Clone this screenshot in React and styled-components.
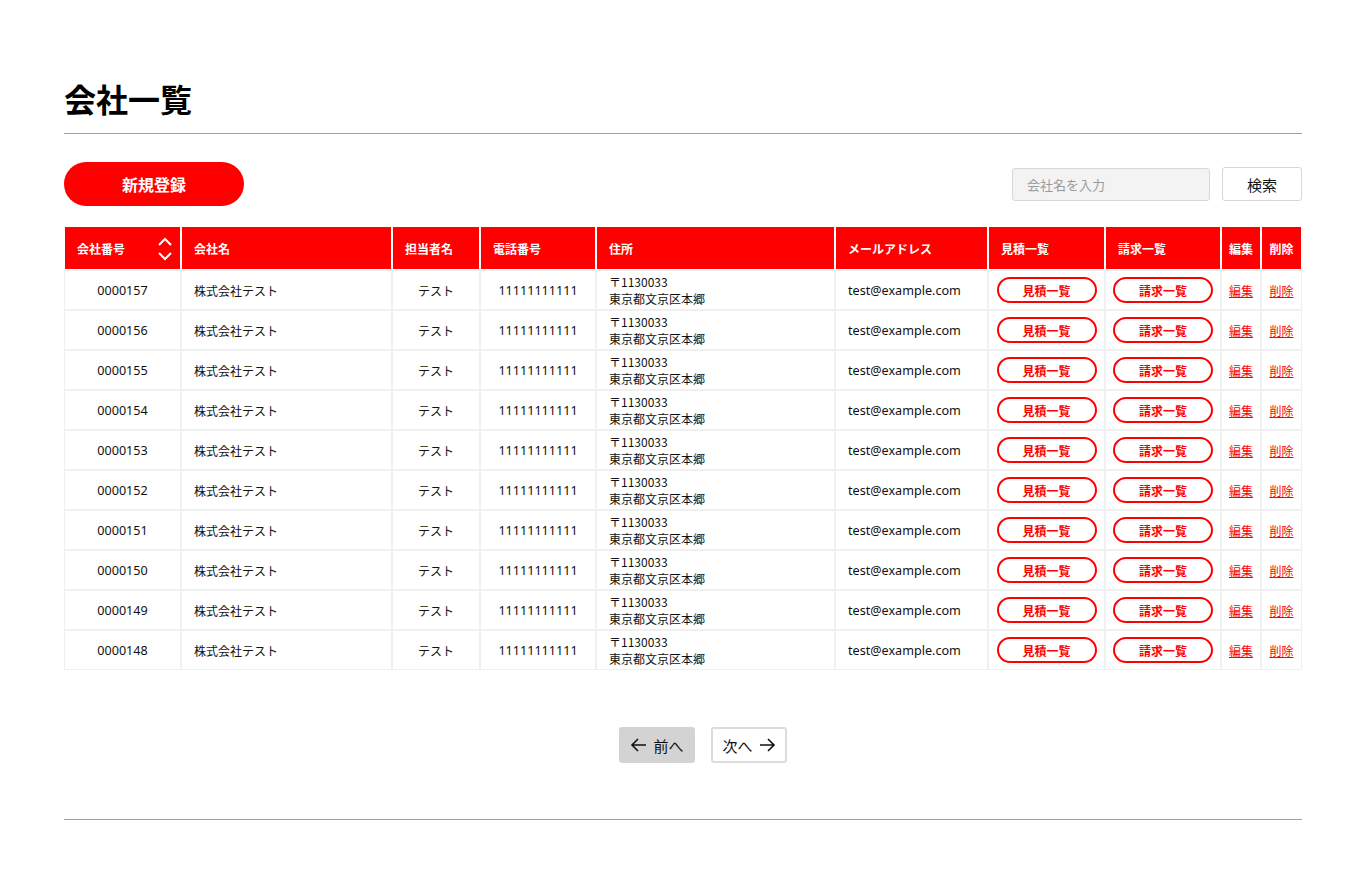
import React from "react";
import styled, { createGlobalStyle } from "styled-components";

const Global = createGlobalStyle`
  html, body { margin: 0; padding: 0; background: #fff; }
  body { font-family: "Noto Sans", "Noto Sans CJK JP", sans-serif; color: #111; }
  * { box-sizing: border-box; }
`;

const Page = styled.div`
  width: 1366px;
  padding: 80px 64px 57px;
`;

const Title = styled.h1`
  margin: 0;
  font-family: "Noto Sans CJK JP", sans-serif;
  font-size: 32px;
  line-height: 36px;
  font-weight: 700;
  color: #000;
`;

const Rule = styled.hr`
  margin: ${(p) => p.$mt || 0}px 0 0;
  border: 0;
  border-top: 1px solid #a0a0a0;
  height: 0;
`;

const Toolbar = styled.div`
  display: flex;
  align-items: center;
  justify-content: space-between;
  margin-top: 28px;
  height: 44px;
`;

const NewButton = styled.button`
  width: 180px;
  height: 44px;
  border: 0;
  border-radius: 22px;
  background: #ff0000;
  color: #fff;
  font-family: "Noto Sans CJK JP", sans-serif;
  font-weight: 700;
  font-size: 16px;
  cursor: pointer;
`;

const SearchBox = styled.div`
  display: flex;
  align-items: center;
  gap: 12px;
`;

const SearchInput = styled.input`
  width: 198px;
  height: 33px;
  border: 1px solid #d8d8d8;
  border-radius: 3px;
  background: #f3f3f3;
  padding: 0 14px;
  font-family: "Noto Sans CJK JP", sans-serif;
  font-size: 13px;
  outline: none;
  &::placeholder { color: #9a9a9a; }
`;

const SearchButton = styled.button`
  width: 80px;
  height: 34px;
  border: 1px solid #d8d8d8;
  border-radius: 3px;
  background: #fff;
  color: #111;
  font-family: "Noto Sans CJK JP", sans-serif;
  font-size: 15px;
`;

const Table = styled.table`
  margin-top: 20px;
  width: 1238px;
  table-layout: fixed;
  border-collapse: separate;
  border-spacing: 0;
`;

const Th = styled.th`
  position: relative;
  height: 44px;
  background: #ff0000;
  border: 1px solid #fff;
  color: #fff;
  font-family: "Noto Sans CJK JP", sans-serif;
  font-size: 12px;
  font-weight: 700;
  text-align: ${(p) => (p.$center ? "center" : "left")};
  padding: ${(p) => (p.$center ? "0" : "0 12px")};
  vertical-align: middle;
`;

const SortIcon = styled.svg`
  position: absolute;
  right: 7px;
  top: 8px;
`;

const Td = styled.td`
  height: 40px;
  border: 1px solid #f0f0f0;
  background: #fff;
  padding: ${(p) => (p.$center ? "0" : "0 12px")};
  text-align: ${(p) => (p.$center ? "center" : "left")};
  vertical-align: middle;
  font-family: ${(p) =>
    p.$latin ? '"Noto Sans", "Noto Sans CJK JP", sans-serif' : '"Noto Sans CJK JP", sans-serif'};
  font-size: ${(p) => (p.$latin ? "12.6px" : "12px")};
  color: #111;
  white-space: nowrap;
`;

const Address = styled.div`
  font-family: "Noto Sans CJK JP", sans-serif;
  font-size: 12px;
  line-height: 17px;
`;

const Pill = styled.button`
  width: 100px;
  height: 26px;
  border: 2px solid #ff0000;
  border-radius: 13px;
  background: #fff;
  color: #ff0000;
  font-family: "Noto Sans CJK JP", sans-serif;
  font-size: 12px;
  font-weight: 700;
  padding: 0;
`;

const TextLink = styled.a`
  color: #ff0000;
  font-family: "Noto Sans CJK JP", sans-serif;
  font-size: 12px;
  text-decoration: underline;
`;

const Pager = styled.div`
  display: flex;
  justify-content: center;
  gap: 16px;
  margin-top: 57px;
  padding-left: 40px;
`;

const PageButton = styled.button`
  display: flex;
  align-items: center;
  justify-content: center;
  gap: 6px;
  width: 76px;
  height: 36px;
  border-radius: 3px;
  border: 2px solid ${(p) => (p.$active ? "#d3d3d3" : "#dcdcdc")};
  background: ${(p) => (p.$active ? "#d3d3d3" : "#fff")};
  color: #111;
  font-family: "Noto Sans CJK JP", sans-serif;
  font-size: 15px;
  padding: 0;
`;

const widths = [117, 211, 88, 116, 239, 153, 117, 116, 40, 41];

const Arrow = ({ dir }) => (
  <svg width="17" height="14" viewBox="0 0 17 14" fill="none" stroke="#111" strokeWidth="1.6">
    {dir === "left" ? (
      <path d="M16 7H2M8 1L2 7l6 6" />
    ) : (
      <path d="M1 7h14M9 1l6 6-6 6" />
    )}
  </svg>
);

const rows = ["0000157", "0000156", "0000155", "0000154", "0000153", "0000152", "0000151", "0000150", "0000149", "0000148"];

export default function App() {
  return (
    <Page>
      <Global />
      <Title>会社一覧</Title>
      <Rule $mt={17} />
      <Toolbar>
        <NewButton>新規登録</NewButton>
        <SearchBox>
          <SearchInput placeholder="会社名を入力" />
          <SearchButton>検索</SearchButton>
        </SearchBox>
      </Toolbar>
      <Table>
        <colgroup>
          {widths.map((w, i) => (
            <col key={i} style={{ width: w }} />
          ))}
        </colgroup>
        <thead>
          <tr>
            <Th>
              会社番号
              <SortIcon width="16" height="28" viewBox="0 0 16 28" fill="none" stroke="#fff" strokeWidth="2">
                <path d="M2 10l6-6 6 6M2 18l6 6 6-6" />
              </SortIcon>
            </Th>
            <Th>会社名</Th>
            <Th>担当者名</Th>
            <Th>電話番号</Th>
            <Th>住所</Th>
            <Th>メールアドレス</Th>
            <Th>見積一覧</Th>
            <Th>請求一覧</Th>
            <Th $center>編集</Th>
            <Th $center>削除</Th>
          </tr>
        </thead>
        <tbody>
          {rows.map((id) => (
            <tr key={id}>
              <Td $center $latin>{id}</Td>
              <Td>株式会社テスト</Td>
              <Td $center>テスト</Td>
              <Td $center $latin>11111111111</Td>
              <Td>
                <Address>
                  〒1130033
                  <br />
                  東京都文京区本郷
                </Address>
              </Td>
              <Td $latin>test@example.com</Td>
              <Td $center>
                <Pill>見積一覧</Pill>
              </Td>
              <Td $center>
                <Pill>請求一覧</Pill>
              </Td>
              <Td $center>
                <TextLink href="#">編集</TextLink>
              </Td>
              <Td $center>
                <TextLink href="#">削除</TextLink>
              </Td>
            </tr>
          ))}
        </tbody>
      </Table>
      <Pager>
        <PageButton $active>
          <Arrow dir="left" />
          前へ
        </PageButton>
        <PageButton>
          次へ
          <Arrow dir="right" />
        </PageButton>
      </Pager>
      <Rule $mt={56} />
    </Page>
  );
}
